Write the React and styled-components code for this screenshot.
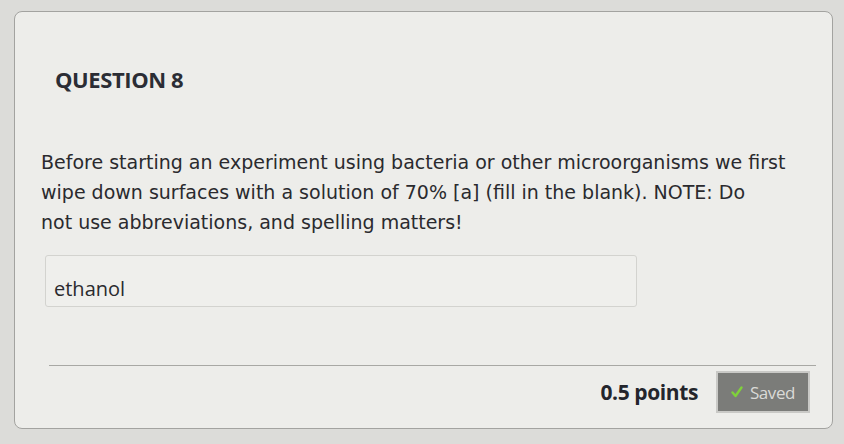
import React from "react"
import styled, {createGlobalStyle} from "styled-components"

const Global = createGlobalStyle`
  html, body {
    margin: 0;
    padding: 0;
    background: #dcdcd9;
  }
  body {
    width: 844px;
    height: 444px;
    overflow: hidden;
  }
`

/* card */
const Card = styled.div`
  margin: 11px 11px 0 14px;
  height: 418px;
  box-sizing: border-box;
  background: #ededea;
  border: 1px solid #a3a3a0;
  border-radius: 8px;
  display: flex;
  flex-direction: column;
`

const Title = styled.h2`
  margin: 52px 0 0 40px;
  font-family: "Open Sans", "Liberation Sans", sans-serif;
  font-weight: 700;
  font-size: 22px;
  letter-spacing: -0.4px;
  color: #2b2d35;
`

const Question = styled.p`
  margin: 53px 0 0 26px;
  font-family: "DejaVu Sans", Verdana, sans-serif;
  font-size: 19px;
  line-height: 30px;
  white-space: nowrap;
  color: #2a2a2e;
`

const Answer = styled.div`
  margin: 18px 0 0 30px;
  width: 592px;
  height: 52px;
  box-sizing: border-box;
  border: 1px solid #d3d3cf;
  border-radius: 3px;
  background: #efefec;
  display: flex;
  align-items: flex-end;
  padding: 0 0 4px 8px;
  font-family: "Open Sans", "Liberation Sans", sans-serif;
  font-size: 20px;
  color: #2a2a2e;
`

const Divider = styled.hr`
  margin: 58px 16px 0 34px;
  border: 0;
  border-top: 1px solid #a8a8a4;
`

const Footer = styled.div`
  display: flex;
  justify-content: flex-end;
  align-items: center;
  gap: 18px;
  margin: 5px 22px 0 0;
`

const Points = styled.span`
  font-family: "Open Sans", "Liberation Sans", sans-serif;
  font-weight: 700;
  font-size: 21px;
  letter-spacing: -0.4px;
  color: #23252c;
`

const SavedButton = styled.div`
  width: 94px;
  height: 42px;
  box-sizing: border-box;
  background: #7b7c79;
  border: 2px solid #c9c9c6;
  display: flex;
  align-items: center;
  justify-content: center;
  gap: 7px;
  font-family: "Open Sans", "Liberation Sans", sans-serif;
  font-size: 17px;
  letter-spacing: -0.4px;
  color: #dadad7;
`

const Check = () => (
  <svg width="12" height="12" viewBox="0 0 12 12">
    <path d="M1.5 6.5 L4.5 10 L10.5 1.5" fill="none" stroke="#7fd13b" strokeWidth="2.4" strokeLinecap="round" strokeLinejoin="round" />
  </svg>
)

const App = () => {
  return (
    <>
      <Global />
      <Card>
        <Title>QUESTION 8</Title>
        <Question>
          Before starting an experiment using bacteria or other microorganisms we first<br />
          wipe down surfaces with a solution of 70% [a] (fill in the blank). NOTE: Do<br />
          not use abbreviations, and spelling matters!
        </Question>
        <Answer>ethanol</Answer>
        <Divider />
        <Footer>
          <Points>0.5 points</Points>
          <SavedButton>
            <Check />
            Saved
          </SavedButton>
        </Footer>
      </Card>
    </>
  )
}

export default App
